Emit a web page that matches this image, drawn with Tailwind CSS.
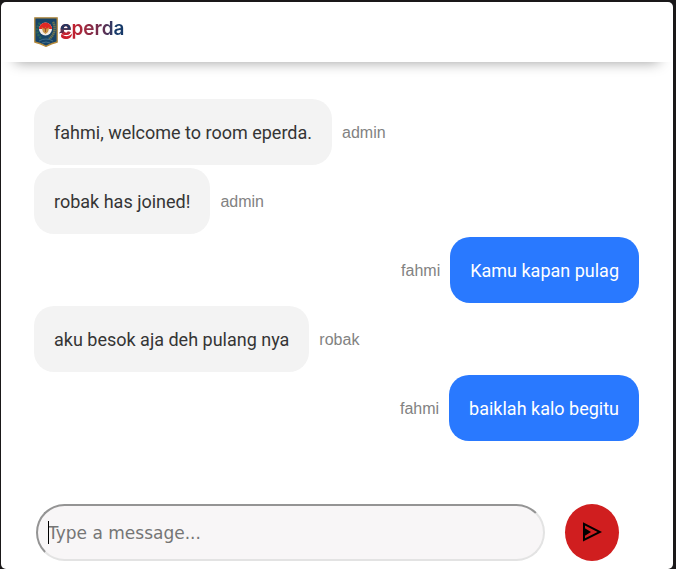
<!DOCTYPE html>
<html lang="id">
<head>
<meta charset="utf-8">
<meta name="viewport" content="width=device-width, initial-scale=1">
<title>eperda chat</title>
<script src="https://cdn.jsdelivr.net/npm/@tailwindcss/browser@4"></script>
</head>
<body class="min-h-screen bg-[#1a1819] pt-[2px] pr-[3px] pl-px flex flex-col font-[Roboto,sans-serif]">
<div class="flex-1 flex flex-col bg-white rounded-[5px] overflow-hidden">
  <header class="h-[60px] shrink-0 flex items-center px-[33px] shadow-[0_14px_14px_-14px_rgba(0,0,0,0.4)]">
    <a href="#" class="flex items-start" aria-label="eperda">
      <svg class="w-[24px] h-[30px]" viewBox="0 0 24 30" aria-hidden="true">
        <path d="M.8.8H23.2V25Q19 26 12 29.300Q5 26 .8 25Z" fill="#174468" stroke="#b58a3c" stroke-width="1.300"/>
        <path d="M6 6C2 10 2 18 8 22" fill="none" stroke="#2b6558" stroke-width="2.500" stroke-dasharray="2 1"/>
        <path d="M19 5C22 10 21 18 15 22" fill="none" stroke="#6f7550" stroke-width="2.500" stroke-dasharray="1.500 .5"/>
        <path d="M5 24Q12 20 19 24M8 26Q12 24 16 26" fill="none" stroke="#456f88" stroke-width="1"/>
        <circle cx="11.500" cy="12" r="6.500" fill="#f4ece6"/>
        <path d="M5 12a6.500 6.500 0 0 1 13 0Z" fill="#df2925"/>
        <path d="M7.500 10l3 2 1-2 1 2 3-2-1.500 5-2.500 2-2.500-2Z" fill="#c79548"/>
        <path d="M11.500 11v4" stroke="#9a4c2c" stroke-width="1"/>
      </svg>
      <span class="relative ml-[2px] text-[19px] leading-6 font-semibold font-[Inter,sans-serif] bg-clip-text text-transparent bg-linear-to-r from-[#c4202f] from-20% via-[#6a2a4d] via-65% to-[#173a69] to-85%"><span class="font-extrabold bg-clip-text text-transparent bg-linear-to-b from-[#26365f] from-50% to-[#c4202f] to-70%">e</span>perda<svg class="absolute -left-px top-[12px] w-[14px] h-[11px]" viewBox="0 0 14 11" aria-hidden="true">
          <path d="M0 4.500Q1 1.500 5 1.500L4 4Q2 3.500 0 4.500Z" fill="#5a2a4a"/>
          <path d="M3 4.500C4.500 8 10 8 13 4.500C13 8.500 9.500 10.500 6 10C2 9.500 1 7 3 4.500Z" fill="#cb202d"/>
        </svg></span>
    </a>
  </header>

  <main class="flex-1 px-[33px] pt-[37px] flex flex-col gap-[3px] text-[18px] leading-[26px] text-[#353535]">
    <div class="flex items-center gap-[10px]">
      <p class="bg-[#f3f3f3] rounded-[20px] px-5 pt-[21px] pb-[19px]">fahmi, welcome to room eperda.</p>
      <span class="pt-[2px] text-base text-[#828282] font-['Liberation_Sans',sans-serif]">admin</span>
    </div>
    <div class="flex items-center gap-[10px]">
      <p class="bg-[#f3f3f3] rounded-[20px] px-5 pt-[21px] pb-[19px]">robak has joined!</p>
      <span class="pt-[2px] text-base text-[#828282] font-['Liberation_Sans',sans-serif]">admin</span>
    </div>
    <div class="flex items-center justify-end gap-[10px] pr-px">
      <span class="pt-[2px] text-base text-[#828282] font-['Liberation_Sans',sans-serif]">fahmi</span>
      <p class="bg-[#2979ff] text-white rounded-[20px] px-5 pt-[21px] pb-[19px]">Kamu kapan pulag</p>
    </div>
    <div class="flex items-center gap-[10px]">
      <p class="bg-[#f3f3f3] rounded-[20px] px-5 pt-[21px] pb-[19px]">aku besok aja deh pulang nya</p>
      <span class="pt-[2px] text-base text-[#828282] font-['Liberation_Sans',sans-serif]">robak</span>
    </div>
    <div class="flex items-center justify-end gap-[10px] pr-px">
      <span class="pt-[2px] text-base text-[#828282] font-['Liberation_Sans',sans-serif]">fahmi</span>
      <p class="bg-[#2979ff] text-white rounded-[20px] px-5 pt-[21px] pb-[19px]">baiklah kalo begitu</p>
    </div>
  </main>

  <form class="flex items-center gap-5 pl-[35px] pr-[54px] pb-2">
    <div class="relative flex-1">
      <input type="text" aria-label="Message" placeholder="Type a message..." class="block w-full h-[57px] rounded-full border-2 border-t-[#949494] border-l-[#949494] border-r-[#e3e3e3] border-b-[#e3e3e3] bg-[#f8f6f7] px-[10px] text-[17px] font-['DejaVu_Sans',sans-serif] placeholder:text-[#757575] outline-none">
      <span class="absolute left-3 top-[17px] w-px h-[23px] bg-black" aria-hidden="true"></span>
    </div>
    <button type="button" aria-label="Send" class="w-[54px] h-[57px] pb-[2px] rounded-[50%] bg-[#d01e1f] flex items-center justify-center">
      <svg class="w-5 h-5" viewBox="0 0 20 20" fill="none" stroke="#000" stroke-width="2" aria-hidden="true">
        <path d="M2 1.800L18 10L2 18V1.800Z"/>
        <path d="M2.500 6L9 10L2.500 14Z" fill="#000" stroke="none"/>
      </svg>
    </button>
  </form>
</div>
</body>
</html>
